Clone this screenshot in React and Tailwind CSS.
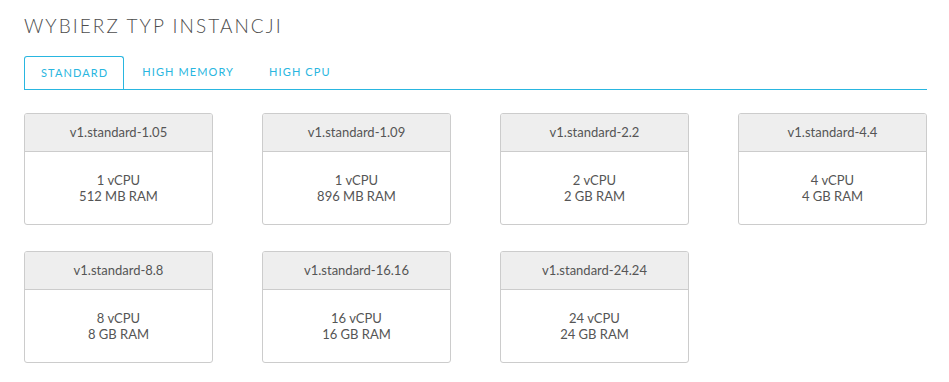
const instances = [
  { name: "v1.standard-1.05", cpu: "1 vCPU", ram: "512 MB RAM" },
  { name: "v1.standard-1.09", cpu: "1 vCPU", ram: "896 MB RAM" },
  { name: "v1.standard-2.2", cpu: "2 vCPU", ram: "2 GB RAM" },
  { name: "v1.standard-4.4", cpu: "4 vCPU", ram: "4 GB RAM" },
  { name: "v1.standard-8.8", cpu: "8 vCPU", ram: "8 GB RAM" },
  { name: "v1.standard-16.16", cpu: "16 vCPU", ram: "16 GB RAM" },
  { name: "v1.standard-24.24", cpu: "24 vCPU", ram: "24 GB RAM" },
];

const tabs = ["STANDARD", "HIGH MEMORY", "HIGH CPU"];

const App = () => {
  return (
    <div className="bg-white min-h-screen px-6 pt-[14px] font-['Lato','Liberation_Sans',sans-serif] text-[#565656]">
      <h1 className="text-[19px] leading-[24px] font-light tracking-[2.05px] text-[#4d4d4d]">
        WYBIERZ TYP INSTANCJI
      </h1>

      <div className="mt-[18px] w-[903px] flex border-b border-[#29b6e0]">
        {tabs.map((tab, i) => (
          <div
            key={tab}
            className={
              i === 0
                ? "h-[33px] pl-4 pr-[15px] flex items-center border border-b-0 border-[#29b6e0] rounded-t-[3px] bg-white -mb-px text-[11px] tracking-[1.1px] text-[#29b6e0]"
                : "h-[33px] pl-[18px] pr-[17px] flex items-center text-[11px] tracking-[1.1px] text-[#29b6e0]"
            }
          >
            {tab}
          </div>
        ))}
      </div>

      <div className="mt-[23px] w-[903px] grid grid-cols-4 gap-x-[49px] gap-y-[26px]">
        {instances.map((it) => (
          <div
            key={it.name}
            className="h-[112px] border border-[#cccccc] rounded-[3px] flex flex-col overflow-hidden"
          >
            <div className="h-[38px] bg-[#eeeeee] border-b border-[#cccccc] flex items-center justify-center text-[13px] text-[#555]">
              {it.name}
            </div>
            <div className="flex-1 flex flex-col items-center justify-center text-[13px] leading-[16px] text-[#555]">
              <span>{it.cpu}</span>
              <span>{it.ram}</span>
            </div>
          </div>
        ))}
      </div>
    </div>
  );
};

export default App;
